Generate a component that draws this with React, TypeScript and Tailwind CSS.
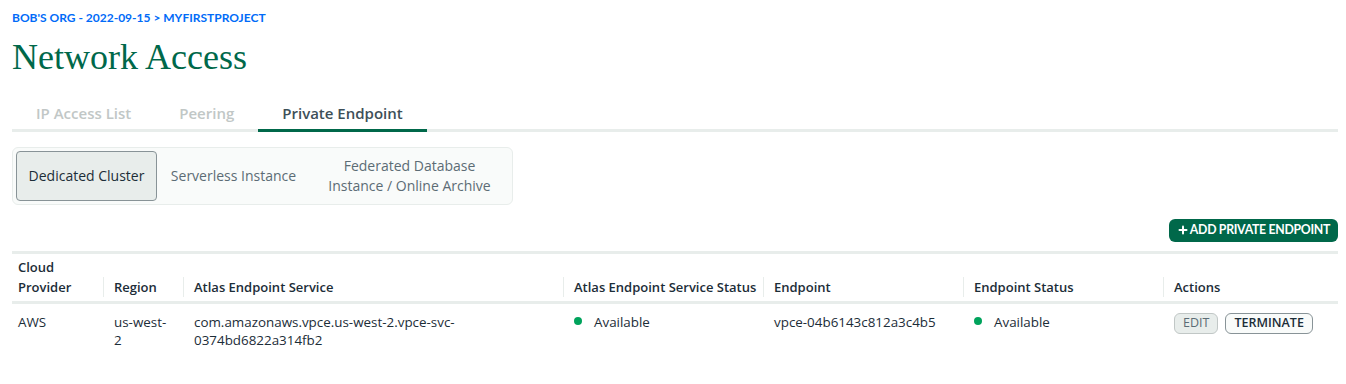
import { Plus } from 'lucide-react';

const tabs = ['IP Access List', 'Peering', 'Private Endpoint'];
const segments = ['Dedicated Cluster', 'Serverless Instance', 'Federated Database Instance / Online Archive'];

function Dot() {
  return <span className="inline-block w-2 h-2 rounded-full bg-[#00a35c] mr-3 align-middle relative -top-[2px]" />;
}

function Th({ children, first, w }: { children: React.ReactNode; first?: boolean; w: string }) {
  return (
    <th className={`${w} text-left align-bottom font-semibold text-[13px] leading-5 text-[#1c2d38] pb-[4px] ${first ? 'pl-1.5' : 'pl-0'}`}>
      <div className={`flex items-end ${first ? '' : 'border-l border-[#e8edeb] pl-[10px]'}`}>
        <span>{children}</span>
      </div>
    </th>
  );
}

export default function App() {
  return (
    <div className="min-h-screen bg-white pl-3 pr-2 pt-[9px] text-[#1c2d38]" style={{ fontFamily: '"Open Sans", sans-serif' }}>
      <div className="text-[12px] font-bold text-[#016bf8]" style={{ fontFamily: 'Lato, sans-serif' }}>
        BOB'S ORG - 2022-09-15 &gt; MYFIRSTPROJECT
      </div>
      <h1 className="mt-[10px] text-[36px] leading-[40px] text-[#00684a]" style={{ fontFamily: '"Liberation Serif", serif' }}>
        Network Access
      </h1>

      <div className="mt-[25px] flex border-b-[3px] border-[#e8edeb]">
        {tabs.map((t, i) => (
          <div
            key={t}
            className={`px-6 pb-[4px] text-[15px] font-semibold -mb-[3px] border-b-[3px] ${
              i === 2 ? 'border-[#00684a] text-[#3d4f58]' : 'border-transparent text-[#c1c7c6]'
            }`}
          >
            {t}
          </div>
        ))}
      </div>

      <div className="mt-[15px] inline-flex items-stretch p-[3px] bg-[#f9fbfa] border border-[#e8edeb] rounded-md h-[58px]">
        {segments.map((s, i) => (
          <div
            key={s}
            className={`flex items-center justify-center text-center text-[14px] leading-5 px-[6px] rounded ${
              i === 0 ? 'bg-[#e8edeb] border border-[#889397] text-[#1c2d38] w-[141px]' : 'text-[#5c6c75]'
            } ${i === 1 ? 'w-[153px]' : ''} ${i === 2 ? 'w-[199px]' : ''}`}
          >
            {s}
          </div>
        ))}
      </div>

      <div className="mt-[14px] flex justify-end">
        <button
          className="flex items-center h-[23px] px-[8px] rounded-md bg-[#00684a] text-white text-[12.3px] font-bold tracking-tight"
          style={{ fontFamily: 'Lato, sans-serif' }}
        >
          <Plus size={12} strokeWidth={4} className="mr-[1px]" />
          ADD PRIVATE ENDPOINT
        </button>
      </div>

      <table className="mt-[9px] w-full border-collapse table-fixed border-t-[3px] border-[#e8edeb]">
        <thead>
          <tr className="border-b-[3px] border-[#e8edeb]">
            <Th first w="w-[91px]">
              <div className="pt-[3px]">Cloud<br />Provider</div>
            </Th>
            <Th w="w-[80px]">Region</Th>
            <Th w="w-[380px]">Atlas Endpoint Service</Th>
            <Th w="w-[200px]">Atlas Endpoint Service Status</Th>
            <Th w="w-[200px]">Endpoint</Th>
            <Th w="w-[200px]">Endpoint Status</Th>
            <Th w="w-[175px]">Actions</Th>
          </tr>
        </thead>
        <tbody className="text-[13.4px] leading-[18px] text-[#1c2d38]">
          <tr>
            <td className="align-top pt-[9px] pl-1.5">AWS</td>
            <td className="align-top pt-[9px] pl-[11px]">us-west-<br />2</td>
            <td className="align-top pt-[9px] pl-[11px]">com.amazonaws.vpce.us-west-2.vpce-svc-<br />0374bd6822a314fb2</td>
            <td className="align-top pt-[9px] pl-[11px]"><Dot />Available</td>
            <td className="align-top pt-[9px] pl-[11px]">vpce-04b6143c812a3c4b5</td>
            <td className="align-top pt-[9px] pl-[11px]"><Dot />Available</td>
            <td className="align-top pt-[9px] pl-[11px]">
              <div className="flex gap-[7px]">
                <span className="h-[21px] px-[8px] flex items-center rounded-md bg-[#e8edeb] border border-[#c1c7c6] text-[12.5px] text-[#5c6c75]">EDIT</span>
                <span className="h-[21px] px-[8px] flex items-center rounded-md bg-[#f9fbfa] border border-[#889397] text-[12.5px] font-semibold text-[#1c2d38]">TERMINATE</span>
              </div>
            </td>
          </tr>
        </tbody>
      </table>
    </div>
  );
}
